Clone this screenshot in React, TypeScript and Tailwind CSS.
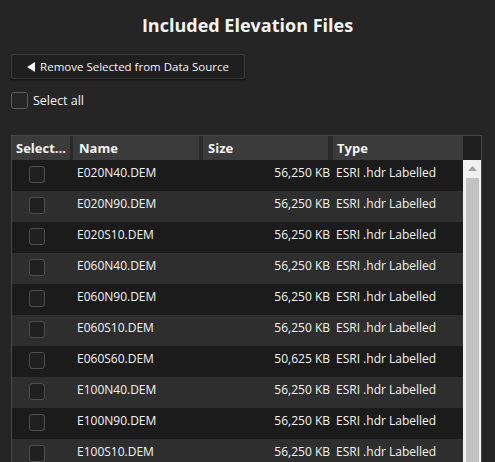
import React from "react";

const rows = [
  ["E020N40.DEM", "56,250 KB"],
  ["E020N90.DEM", "56,250 KB"],
  ["E020S10.DEM", "56,250 KB"],
  ["E060N40.DEM", "56,250 KB"],
  ["E060N90.DEM", "56,250 KB"],
  ["E060S10.DEM", "56,250 KB"],
  ["E060S60.DEM", "50,625 KB"],
  ["E100N40.DEM", "56,250 KB"],
  ["E100N90.DEM", "56,250 KB"],
  ["E100S10.DEM", "56,250 KB"],
];

function Box({ cls }: { cls: string }) {
  return <div className={cls} />;
}

export default function App() {
  return (
    <div
      className="w-[495px] h-[462px] overflow-hidden bg-[#252525] text-[#f4f4f4]"
      style={{ fontFamily: '"Open Sans", "Noto Sans", sans-serif' }}
    >
      <div className="pt-[12px] h-[41px] text-center text-[18px] leading-[26px] font-bold">
        Included Elevation Files
      </div>
      <div className="pl-[11px] pt-[13px]">
        <div className="w-[234px] h-[25px] flex items-center justify-center gap-[4px] bg-[#1f1f1f] border border-[#3a3a3a] rounded-[2px] shadow-[0_1px_2px_rgba(0,0,0,0.6)] text-[11.5px]">
          <svg width="9" height="10" viewBox="0 0 9 10">
            <path d="M0 5 L8 0 L8 10 Z" fill="#f4f4f4" />
          </svg>
          <span>Remove Selected from Data Source</span>
        </div>
      </div>
      <div className="pl-[11px] pt-[13px] flex items-center gap-[5px] h-[30px]">
        <Box cls="w-[17px] h-[17px] rounded-[3px] border border-[#5a5a5a] bg-[#262626]" />
        <span className="text-[12.5px] leading-[17px]">Select all</span>
      </div>
      <div className="ml-[11px] mt-[26px] w-[471px] border-l border-t border-r border-[#474747] bg-[#1d1d1d]">
        <div className="flex h-[24px] bg-[#1e1e1e] text-[13px] font-bold leading-[24px]">
          <div className="w-[58px] bg-[#3b3b3b] pl-[4px] whitespace-nowrap overflow-hidden">Select...</div>
          <div className="w-[3px] bg-[#2a2a2a]" />
          <div className="w-[126px] bg-[#3b3b3b] pl-[6px]">Name</div>
          <div className="w-[4px] bg-[#2a2a2a]" />
          <div className="w-[125px] bg-[#3b3b3b] pl-[5px]">Size</div>
          <div className="w-[5px] bg-[#2a2a2a]" />
          <div className="w-[130px] bg-[#3b3b3b] pl-[4px]">Type</div>
        </div>
        <div className="flex">
          <div className="w-[451px]">
            {rows.map(([name, size], i) => (
              <div
                key={name}
                className={`grid grid-cols-[61px_130px_130px_130px] h-[31px] text-[12px] leading-[17px] ${
                  i % 2 === 0 ? "bg-[#1b1b1b]" : "bg-[#2e2e2e]"
                }`}
              >
                <div className="pl-[17px] pt-[6px]">
                  <Box cls="w-[16px] h-[17px] rounded-[3px] border border-[#4e4e4e] bg-[#202020]" />
                </div>
                <div className="pl-[4px] pt-[4px]">{name}</div>
                <div className="pr-[3px] pt-[4px] text-right">{size}</div>
                <div className="pl-[3px] pt-[4px] whitespace-nowrap">ESRI .hdr Labelled</div>
              </div>
            ))}
          </div>
          <div className="w-[18px] bg-[#f0f0f0] flex flex-col items-center">
            <svg width="9" height="6" viewBox="0 0 9 6" className="mt-[6px]">
              <path d="M0 5 L4.5 0 L9 5 Z" fill="#a3a3a3" />
            </svg>
            <div className="mt-[6px] w-[13px] h-[300px] bg-[#c2c2c2]" />
          </div>
        </div>
      </div>
    </div>
  );
}
